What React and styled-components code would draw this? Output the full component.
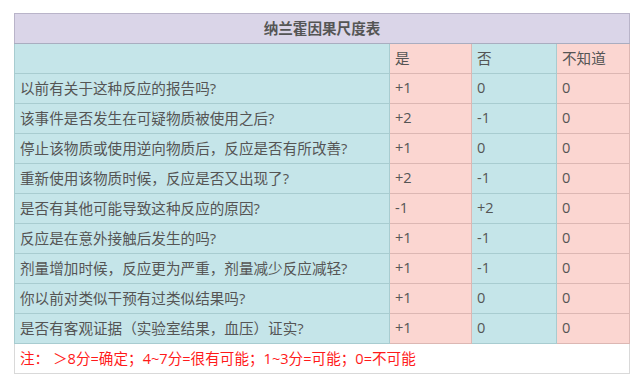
import React from "react";
import styled, { createGlobalStyle } from "styled-components";

const rows = [
  ["以前有关于这种反应的报告吗?", "+1", "0", "0"],
  ["该事件是否发生在可疑物质被使用之后?", "+2", "-1", "0"],
  ["停止该物质或使用逆向物质后，反应是否有所改善?", "+1", "0", "0"],
  ["重新使用该物质时候，反应是否又出现了?", "+2", "-1", "0"],
  ["是否有其他可能导致这种反应的原因?", "-1", "+2", "0"],
  ["反应是在意外接触后发生的吗?", "+1", "-1", "0"],
  ["剂量增加时候，反应更为严重，剂量减少反应减轻?", "+1", "-1", "0"],
  ["你以前对类似干预有过类似结果吗?", "+1", "0", "0"],
  ["是否有客观证据（实验室结果，血压）证实?", "+1", "0", "0"],
];

const GlobalStyle = createGlobalStyle`
  body {
    margin: 0;
    background: #fff;
    font-family: "Open Sans", "Noto Sans CJK SC", sans-serif;
  }
`;

const Page = styled.div`
  padding: 13px 10px 0 14px;
`;

const Table = styled.table`
  border-collapse: collapse;
  width: 615px;
  table-layout: fixed;
  font-size: 14.6px;
  color: #555;
`;

const Cell = styled.td`
  height: 30px;
  padding: 0 0 3px 5px;
  box-sizing: border-box;
  white-space: nowrap;
  vertical-align: middle;
  background: ${(p) => (p.$pink ? "#fbd6d1" : "#c5e5e9")};
  border: 1px solid ${(p) => (p.$pink ? "#dcb7b3" : "#a8ccd0")};
`;

const Title = styled.th`
  height: 30px;
  box-sizing: border-box;
  padding: 0 0 3px;
  font-weight: bold;
  color: #555;
  text-align: center;
  background: #dad5e8;
  border: 1px solid #b9b4c9;
  border-bottom-color: #a9adc0;
`;

const Note = styled.td`
  height: 30px;
  box-sizing: border-box;
  padding: 0 0 3px 5px;
  color: #ff1a1a;
  background: #fff;
  border: 1px solid #d9d9d9;
`;

export default function App() {
  return (
    <Page>
      <GlobalStyle />
      <Table>
        <colgroup>
          <col style={{ width: 375 }} />
          <col style={{ width: 82 }} />
          <col style={{ width: 85 }} />
          <col style={{ width: 73 }} />
        </colgroup>
        <thead>
          <tr>
            <Title colSpan={4}>纳兰霍因果尺度表</Title>
          </tr>
        </thead>
        <tbody>
          <tr>
            <Cell />
            <Cell $pink>是</Cell>
            <Cell>否</Cell>
            <Cell $pink>不知道</Cell>
          </tr>
          {rows.map((r) => (
            <tr key={r[0]}>
              <Cell>{r[0]}</Cell>
              <Cell $pink>{r[1]}</Cell>
              <Cell>{r[2]}</Cell>
              <Cell $pink>{r[3]}</Cell>
            </tr>
          ))}
          <tr>
            <Note colSpan={4}>注： ＞8分=确定；4~7分=很有可能；1~3分=可能；0=不可能</Note>
          </tr>
        </tbody>
      </Table>
    </Page>
  );
}
